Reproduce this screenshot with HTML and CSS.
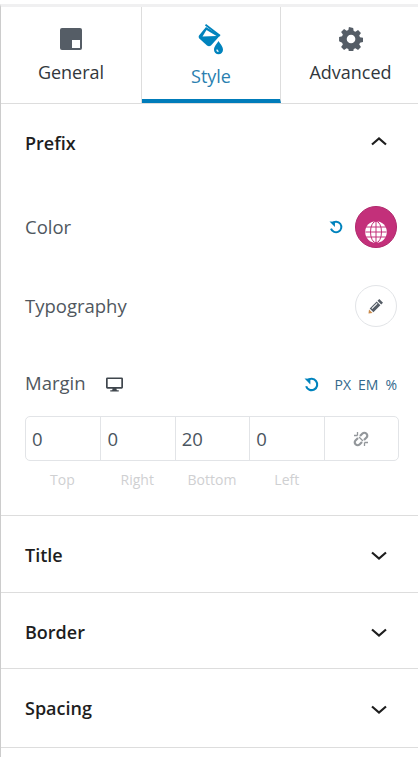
FILE: index.html
```html
<!DOCTYPE html>
<html lang="en">
<head>
    <meta charset="UTF-8">
    <title>Style panel</title>
    <link rel="stylesheet" href="styles.css">
</head>
<body>
    <div class="panel">
        <div class="tabs">
            <div class="tab">
                <svg class="tab-icon" width="22" height="22" viewBox="0 0 22 22"><rect width="22" height="22" rx="2" fill="#555d66"/><rect x="12" y="12" width="8" height="8" fill="#fff"/></svg>
                <span>General</span>
            </div>
            <div class="tab active">
                <svg class="tab-icon" width="26" height="31" viewBox="0 0 26 31"><path d="M7.500.7L22 11.700" fill="none" stroke="#0083bd" stroke-width="1.800"/><path fill="#0083bd" d="M8 3L1 11.500Q0 13 1.300 14.500L9 21.500Q11 23 13 21.500L22 11.500z"/><path fill="#fff" d="M8.500 6L4.500 12.500L18.500 12z"/><path fill="#0083bd" d="M20.500 17C22 20 25 22 25 25.800a4.500 4.500 0 0 1-9 0C16 22 19 20 20.500 17z"/><path fill="#fff" d="M18.500 25.500a2.200 2.200 0 0 0 2 2.600v-1.300a1.200 1.200 0 0 1-.9-1.300z"/></svg>
                <span>Style</span>
            </div>
            <div class="tab">
                <svg class="tab-icon" width="24" height="24" viewBox="0 0 24 24"><path fill="#555d66" fill-rule="evenodd" d="M14.300 0l.6 3.300 1.900.8 2.800-1.900 3.200 3.200-1.900 2.800.8 1.900 3.300.6v4.600l-3.300.6-.8 1.900 1.900 2.800-3.200 3.200-2.800-1.900-1.900.8-.6 3.300H9.700l-.6-3.300-1.900-.8-2.800 1.900-3.200-3.200 1.900-2.800-.8-1.900L-1 14.300V9.700l3.300-.6.800-1.900L1.200 4.400l3.200-3.200 2.800 1.900 1.900-.8.600-3.300zM12 7.300a4.700 4.700 0 1 0 0 9.400 4.700 4.700 0 0 0 0-9.400z" transform="translate(1 1) scale(.92)"/></svg>
                <span>Advanced</span>
            </div>
        </div>

        <div class="section open">
            <div class="section-head">
                <h3>Prefix</h3>
                <svg class="chevron up" width="18" height="10" viewBox="0 0 18 10"><path d="M2 8.500l7-6 7 6" fill="none" stroke="#1e1e1e" stroke-width="2.200"/></svg>
            </div>

            <div class="row row-color">
                <label>Color</label>
                <div class="row-tools">
                    <svg class="reset" width="14" height="14" viewBox="0 0 14 14"><path d="M3.200 3.300A5.300 5.300 0 1 1 2 8.600" fill="none" stroke="#0083bd" stroke-width="2"/><path d="M.500 1.500l5.500.2-.1 5.300z" fill="#0083bd"/></svg>
                    <div class="swatch">
                        <svg width="22" height="22" viewBox="0 0 22 22"><circle cx="11" cy="11" r="10.800" fill="#fff"/><g fill="none" stroke="#c3307a" stroke-width="1"><path d="M1 6h20M.500 11h21M1 16h20M11 0v22"/><ellipse cx="11" cy="11" rx="5.500" ry="10.800"/></g></svg>
                    </div>
                </div>
            </div>

            <div class="row row-type">
                <label>Typography</label>
                <div class="round-btn">
                    <svg width="16" height="16" viewBox="0 0 16 16"><path fill="#555d66" d="M11.300 1l3.700 3.700-1.800 1.800-3.700-3.700zM8.700 3.600l3.700 3.700-7 7-3.700-3.700z"/><path fill="#fff" d="M8.800 5l.7.7-5.300 5.300-.7-.7z"/><path fill="#c98a4b" d="M1 11.500L.500 15.500l4-.6z"/></svg>
                </div>
            </div>

            <div class="margin-head">
                <div class="margin-label">
                    <label>Margin</label>
                    <svg width="17" height="15" viewBox="0 0 18 15"><path fill="#3f464d" fill-rule="evenodd" d="M1.500 0h15A1.500 1.500 0 0 1 18 1.500v9a1.500 1.500 0 0 1-1.500 1.500H11l.5 1.500h2v1.500h-9v-1.500h2L7 12H1.500A1.500 1.500 0 0 1 0 10.500v-9A1.500 1.500 0 0 1 1.500 0zM1.800 1.800v8.400h14.400V1.800z"/></svg>
                </div>
                <div class="units">
                    <svg class="reset" width="15" height="15" viewBox="0 0 14 14"><path d="M3.200 3.300A5.300 5.300 0 1 1 2 8.600" fill="none" stroke="#0083bd" stroke-width="2"/><path d="M.500 1.500l5.500.2-.1 5.300z" fill="#0083bd"/></svg>
                    <span class="unit">PX</span>
                    <span class="unit">EM</span>
                    <span class="unit">%</span>
                </div>
            </div>

            <div class="dimensions">
                <div class="cell">0</div>
                <div class="cell">0</div>
                <div class="cell">20</div>
                <div class="cell">0</div>
                <div class="cell link">
                    <svg width="16" height="16" viewBox="0 0 16 16" fill="none" stroke="#93979b" stroke-width="2.200"><path d="M7 5L9.500 2.500a2.600 2.600 0 0 1 3.700 0l.3.300a2.600 2.600 0 0 1 0 3.700L11 9"/><path d="M9 11L6.500 13.500a2.600 2.600 0 0 1-3.700 0l-.3-.3a2.600 2.600 0 0 1 0-3.700L5 7"/><path stroke-width="1.300" d="M1 4.500h3.500M4.500 1v3.500M11.500 15v-3.500M15 11.500h-3.500M6 6l4 4"/></svg>
                </div>
            </div>
            <div class="dim-labels">
                <span>Top</span>
                <span>Right</span>
                <span>Bottom</span>
                <span>Left</span>
                <span></span>
            </div>
        </div>

        <div class="section">
            <div class="section-head">
                <h3>Title</h3>
                <svg class="chevron" width="18" height="10" viewBox="0 0 18 10"><path d="M2 1.500l7 6 7-6" fill="none" stroke="#1e1e1e" stroke-width="2.200"/></svg>
            </div>
        </div>
        <div class="section short">
            <div class="section-head">
                <h3>Border</h3>
                <svg class="chevron" width="18" height="10" viewBox="0 0 18 10"><path d="M2 1.500l7 6 7-6" fill="none" stroke="#1e1e1e" stroke-width="2.200"/></svg>
            </div>
        </div>
        <div class="section tall">
            <div class="section-head">
                <h3>Spacing</h3>
                <svg class="chevron" width="18" height="10" viewBox="0 0 18 10"><path d="M2 1.500l7 6 7-6" fill="none" stroke="#1e1e1e" stroke-width="2.200"/></svg>
            </div>
        </div>
    </div>
</body>
</html>
```

FILE: styles.css
```css
html, body {
    margin: 0;
    height: 100%;
    background: #fff;
}

body {
    font-family: "Open Sans", sans-serif;
    color: #1e1e1e;
    overflow: hidden;
}

.panel {
    box-sizing: border-box;
    height: 753px;
    margin-top: 4px;
    border-top: 3px solid #f0f0f1;
    border-left: 1px solid #ccc;
}

.tabs {
    display: flex;
    height: 96px;
    border-bottom: 1px solid #ddd;
}

.tab {
    box-sizing: border-box;
    width: 141px;
    height: 96px;
    padding-top: 21px;
    display: flex;
    flex-direction: column;
    align-items: center;
    font-size: 18px;
    line-height: 24px;
    color: #32373c;
}

.tab:first-child {
    border-right: 1px solid #ddd;
}

.tab:last-child {
    width: 137px;
    padding-top: 20px;
    padding-left: 2px;
}

.tab-icon {
    margin-bottom: 10px;
}

.tab:last-child .tab-icon {
    margin-bottom: 9px;
}

.tab.active {
    width: 139px;
    padding-top: 17px;
    border-right: 1px solid #ddd;
    border-bottom: 4px solid #007cba;
    color: #2a7fb0;
}

.tab.active .tab-icon {
    margin-bottom: 9px;
}

.section {
    border-bottom: 1px solid #ddd;
    padding: 0 19px 0 24px;
}

.section-head {
    display: flex;
    justify-content: space-between;
    align-items: center;
    height: 76px;
}

.section.open .section-head {
    height: 79px;
}

.section.short .section-head {
    height: 75px;
}

.section.tall .section-head {
    height: 78px;
}

.section h3 {
    margin: 2px 0 0;
    font-size: 18px;
    font-weight: 600;
    line-height: 24px;
    color: #1e1e1e;
}

.section.open h3 {
    margin: 0 0 2px;
}

.section.tall h3 {
    margin: 0;
}

.chevron {
    margin-right: 11px;
    margin-top: 4px;
}

.chevron.up {
    margin-top: 0;
    margin-bottom: 5px;
}

label {
    font-size: 18.5px;
    line-height: 24px;
    color: #50575e;
}

.row {
    display: flex;
    justify-content: space-between;
    align-items: center;
}

.row-color {
    height: 42px;
    margin-top: 23px;
    margin-right: 2px;
}

.row-tools {
    display: flex;
    align-items: center;
    gap: 12px;
}

.swatch {
    width: 42px;
    height: 42px;
    padding-top: 10px;
    border-radius: 50%;
    background: #c3307a;
    border: 1px solid #b0286c;
    box-sizing: border-box;
    display: flex;
    align-items: center;
    justify-content: center;
}

.row-type {
    height: 42px;
    margin-top: 37px;
    margin-right: 2px;
}

.round-btn {
    box-sizing: border-box;
    width: 42px;
    height: 42px;
    border-radius: 50%;
    border: 1px solid #e2e4e7;
    display: flex;
    align-items: center;
    justify-content: center;
}

.margin-head {
    display: flex;
    justify-content: space-between;
    align-items: center;
    height: 24px;
    margin-top: 45px;
}

.margin-label {
    display: flex;
    align-items: center;
    gap: 20px;
}

.margin-label label {
    margin-bottom: 2px;
}

.units {
    display: flex;
    align-items: center;
    gap: 7px;
    font-size: 14px;
    color: #32688c;
    margin-right: 2px;
}

.units .reset {
    margin-right: 9px;
}

.dimensions {
    display: grid;
    grid-template-columns: repeat(5, 1fr);
    height: 45px;
    margin-top: 20px;
    border: 1px solid #e2e4e7;
    border-radius: 5px;
    box-sizing: border-box;
}

.cell {
    display: flex;
    align-items: center;
    padding-left: 6px;
    font-size: 18.5px;
    color: #4a5560;
    border-left: 1px solid #e2e4e7;
}

.cell:first-child {
    border-left: none;
}

.cell.link {
    justify-content: center;
    padding-left: 0;
}

.dim-labels {
    display: grid;
    grid-template-columns: repeat(5, 1fr);
    margin-top: 9px;
    padding-bottom: 25px;
    font-size: 14px;
    line-height: 20px;
    color: #cfd0d2;
    text-align: center;
}
```
